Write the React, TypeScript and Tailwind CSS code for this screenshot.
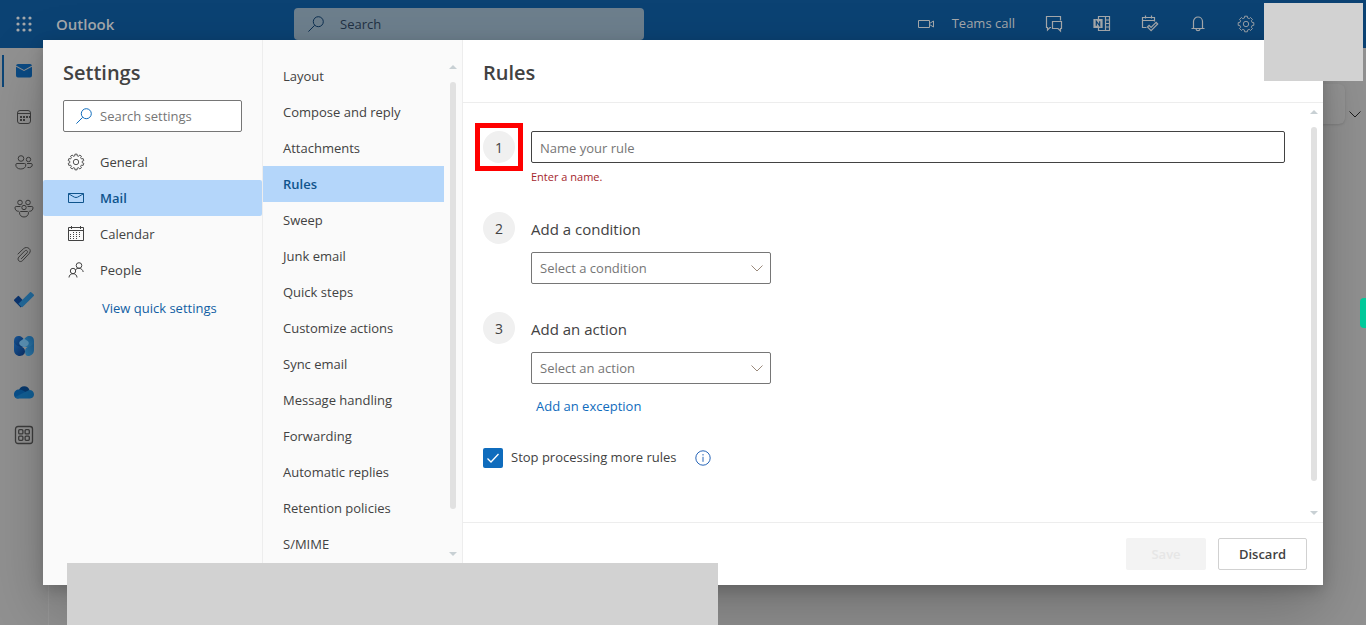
import type { ReactNode } from "react";

const categories = [
  { label: "General", icon: <GearIcon className="size-[18px]" teeth={10} /> },
  { label: "Mail", icon: <MailIcon />, active: true },
  { label: "Calendar", icon: <CalendarIcon /> },
  { label: "People", icon: <PeopleIcon /> },
];

const sections = [
  "Layout",
  "Compose and reply",
  "Attachments",
  "Rules",
  "Sweep",
  "Junk email",
  "Quick steps",
  "Customize actions",
  "Sync email",
  "Message handling",
  "Forwarding",
  "Automatic replies",
  "Retention policies",
  "S/MIME",
];

// closed gear outline, each tooth is a short outer edge between two valleys
function gearPath(teeth: number) {
  const step = (Math.PI * 2) / teeth;
  const points: string[] = [];
  for (let i = 0; i < teeth; i++) {
    const corners = [
      [-0.3, 7],
      [-0.22, 8.8],
      [0.22, 8.8],
      [0.3, 7],
    ];
    for (const [offset, r] of corners) {
      const a = (i + offset) * step;
      points.push(`${(Math.sin(a) * r).toFixed(2)} ${(-Math.cos(a) * r).toFixed(2)}`);
    }
  }
  return `M${points.join("L")}Z`;
}

function GearIcon({ className, teeth = 8 }: { className: string; teeth?: number }) {
  return (
    <svg viewBox="-10 -10 20 20" className={className} fill="none" stroke="currentColor" strokeWidth="1" strokeLinejoin="round">
      <path d={gearPath(teeth)} />
      <circle r="3" />
    </svg>
  );
}

function MailIcon() {
  return (
    <svg viewBox="0 0 18 18" className="size-[18px]" fill="none" stroke="currentColor">
      <path d="M1.5 4.5h15v9h-15zM1.5 4.800C5 6.500 7 8.500 9 8.500s4-2 7.500-3.700" />
    </svg>
  );
}

function CalendarIcon() {
  return (
    <svg viewBox="0 0 18 18" className="size-[18px]" fill="none" stroke="currentColor">
      <path d="M1.500 2.500h15v13h-15zM1.500 5.500h15M4.500 1v3M13.500 1v3" />
      <path d="M6 7.500h9M3 9.500h12M3 11.500h12M3 13.500h9" strokeDasharray="1 2" />
    </svg>
  );
}

function PeopleIcon() {
  return (
    <svg viewBox="0 0 18 18" className="size-[18px]" fill="none" stroke="currentColor">
      <circle cx="12" cy="4.500" r="2.800" />
      <circle cx="6" cy="10" r="2.700" />
      <path d="M8.500 9C9 7.800 10.300 7.300 12 7.300c2.200 0 4 1.800 4.200 3.700M2 16.500c0-2.200 1.800-3.800 4-3.800s4 1.600 4 3.800" />
    </svg>
  );
}

function SearchIcon({ className }: { className: string }) {
  return (
    <svg viewBox="0 0 16 16" className={className} fill="none" stroke="currentColor">
      <circle cx="10.300" cy="5.700" r="5" />
      <path d="M6.700 9.300L0.400 15.600" />
    </svg>
  );
}

function Chevron({ className }: { className: string }) {
  return (
    <svg viewBox="0 0 12 12" className={className} fill="none" stroke="currentColor">
      <path d="M0.500 3.500L6 9l5.500-5.500" />
    </svg>
  );
}

function RailButton({ label, children, active }: { label: string; children: ReactNode; active?: boolean }) {
  return (
    <button aria-label={label} className={`flex h-[46px] w-full items-center pl-0.5 ${active ? "text-[#0b4a83]" : "text-[#3c3c3c]"}`}>
      <span className={`mr-[10px] h-8 w-0.5 ${active ? "bg-[#0c4577]" : ""}`} />
      {children}
    </button>
  );
}

function Rail() {
  return (
    <nav aria-label="Apps" className="w-12 shrink-0">
      <RailButton label="Mail" active>
        <svg viewBox="0 0 20 20" className="size-5">
          <path d="M2 5.700L10 10l8-4.300V14.500a2 2 0 0 1-2 2H4a2 2 0 0 1-2-2z" fill="currentColor" />
          <path d="M2 4.600A2 2 0 0 1 4 3h12a2 2 0 0 1 2 1.600L10 8.900z" fill="currentColor" />
        </svg>
      </RailButton>
      <RailButton label="Calendar">
        <svg viewBox="0 0 20 20" className="size-5" fill="none" stroke="currentColor">
          <rect x="3.500" y="3.500" width="13" height="13" rx="2.500" />
          <path d="M3.500 6.500h13" />
          <path d="M9 10h7M6 13h6" strokeWidth="2" strokeDasharray="2 1" />
          <path d="M6 10h2" strokeWidth="2" />
        </svg>
      </RailButton>
      <RailButton label="People">
        <svg viewBox="0 0 20 20" className="size-5" fill="none" stroke="currentColor">
          <circle cx="7" cy="5.500" r="2.800" />
          <circle cx="14.500" cy="6.500" r="2.200" />
          <path d="M3 10.500h7.500c.8 0 1.300.5 1.300 1.300 0 2.500-1.800 4.200-5 4.200s-5-1.700-5-4.200c0-.8.400-1.300 1.200-1.300zM13 10.500h4c.8 0 1.300.5 1.300 1.200 0 2-1.500 3.300-4.800 2.800" />
        </svg>
      </RailButton>
      <RailButton label="Groups">
        <svg viewBox="0 0 20 20" className="size-5" fill="none" stroke="currentColor">
          <circle cx="6" cy="3.500" r="2.300" />
          <circle cx="14" cy="3.500" r="2.300" />
          <circle cx="10" cy="8.500" r="2.200" />
          <path d="M6.500 12.500h7c.7 0 1 .5 1 1.200 0 2.500-1.800 4.300-4.500 4.300s-4.500-1.800-4.500-4.300c0-.7.300-1.200 1-1.200zM6.500 7.500H2.200c-.8 0-1.200.5-1.200 1.200 0 2 1.300 3.800 3.800 3.600M13.500 7.500h4.300c.8 0 1.200.5 1.200 1.200 0 2-1.300 3.800-3.800 3.600" />
        </svg>
      </RailButton>
      <RailButton label="Files">
        <svg viewBox="0 0 20 20" className="size-5" fill="none" stroke="currentColor" strokeLinecap="round" strokeLinejoin="round">
          <path d="M4 9l5.500-5.300c3.500-3.200 9 .7 5.800 4.700l-6.800 7.300c-2.600 2.500-6-1-3.700-3.600l6-6.200c1.800-1.500 3.600.5 2.200 2l-5.600 5.800" />
        </svg>
      </RailButton>
      <RailButton label="To Do">
        <svg viewBox="0 0 20 20" className="size-5">
          <path d="M3.700 5.200L0.300 8.600a1 1 0 0 0 0 1.400l6.400 6.400 4.500-4.600-6.100-6.600a1 1 0 0 0-1.400 0z" fill="#0b3570" />
          <path d="M15.300 1.900L4.400 12.700l3 3.100a1 1 0 0 0 1.400 0L19.700 5a1 1 0 0 0 0-1.400l-1.900-1.900a1.700 1.700 0 0 0-2.500.2z" fill="#226a9c" />
        </svg>
      </RailButton>
      <RailButton label="Viva Engage">
        <svg viewBox="0 0 20 20" className="mb-0.5 size-5">
          <defs>
            <linearGradient id="engage-left" x1="0" y1="0" x2="1" y2="1">
              <stop offset="0" stopColor="#185a9c" />
              <stop offset="1" stopColor="#0a2d63" />
            </linearGradient>
            <linearGradient id="engage-right" x1="1" y1="0" x2="0" y2="1">
              <stop offset="0" stopColor="#1b5f94" />
              <stop offset="1" stopColor="#2f7aa8" />
            </linearGradient>
          </defs>
          <path d="M0 4.500C0 2 2 0 4.500 0S10 2 10 5v6H4.500C2 11 0 9 0 6.500z" fill="url(#engage-left)" />
          <path d="M20 4.500C20 2 18 0 15.500 0S10 2 10 5v6h5.500C18 11 20 9 20 6.500z" fill="url(#engage-right)" />
          <path d="M0 6c1 2.500 3 4 6 4.500 3 .6 5 2 5 4.800 0 2.700-2.200 4.700-5 4.700-3.500 0-6-2.500-6-6z" fill="url(#engage-left)" />
          <path d="M20 6c-1 2.500-2.500 4-5 4.500-2.800.6-4 2.500-4 5 0 2.500 1 4.500 3 4.500 3.500 0 6-2.500 6-6z" fill="url(#engage-right)" />
          <path d="M10 2.500l4 2.800c1.700 2 .8 4.700-4 5.900-4.800-1.200-5.700-3.900-4-5.900z" fill="#5b93b6" />
        </svg>
      </RailButton>
      <RailButton label="OneDrive">
        <svg viewBox="0 0 20 20" className="size-5">
          <path d="M5 7a5.500 5.500 0 0 1 10.500 0l-4 4z" fill="#07386c" />
          <path d="M5 6.500c2-.2 3.500.6 5 1.500l6 4-12 3.500C1 15.500 0 13.500 0 11.500c0-3 2.200-5 5-5z" fill="#08508c" />
          <path d="M15.500 7c2.700 0 4.500 2 4.500 4.300s-1.500 4.200-4 4.200H4.500C3 15.500 2 15 1.200 14L11 9z" fill="#125f95" />
        </svg>
      </RailButton>
      <RailButton label="More apps">
        <svg viewBox="0 0 20 20" className="mb-2 size-5" fill="none" stroke="currentColor" strokeWidth="1.300">
          <rect x="1.500" y="1.500" width="17" height="17" rx="2.500" />
          <rect x="4.700" y="4.700" width="4.200" height="4.200" rx="1" />
          <rect x="11.100" y="4.700" width="4.200" height="4.200" rx="1" />
          <rect x="4.700" y="11.100" width="4.200" height="4.200" rx="1" />
          <rect x="11.100" y="11.100" width="4.200" height="4.200" rx="1" />
        </svg>
      </RailButton>
    </nav>
  );
}

function Header() {
  return (
    <header className="flex h-12 shrink-0 items-center bg-[#0b4273] text-[#a5a8ab]">
      <button aria-label="App launcher" className="flex w-12 justify-center">
        <svg viewBox="0 0 16 16" className="size-4" fill="currentColor">
          {[2, 8, 14].map((y) => [2, 8, 14].map((x) => <circle key={`${x}-${y}`} cx={x} cy={y} r="1.600" />))}
        </svg>
      </button>
      <span className="w-[246px] pl-2 text-[15px] font-semibold">Outlook</span>
      <label className="flex h-8 w-[350px] items-center gap-4 rounded bg-[#6d7f8d] pl-3.5 text-[#0c2f50]">
        <SearchIcon className="size-4" />
        <input type="search" placeholder="Search" aria-label="Search" className="min-w-0 flex-1 pt-0.5 text-[13px] outline-none placeholder:text-[#1f3144]" />
      </label>
      <div className="ml-auto mr-[111px] flex items-center">
        <button className="flex items-center gap-[17px] text-[13px]">
          <svg viewBox="0 0 18 18" className="size-[18px]" fill="none" stroke="currentColor">
            <path d="M1.500 5.500h11v7h-11zM12.500 8.500l4-2.500v6l-4-2.500" />
          </svg>
          Teams call
        </button>
        <div className="ml-[30px] flex gap-[30px]">
          <button aria-label="Chat">
            <svg viewBox="0 0 18 18" className="size-[18px]" fill="none" stroke="currentColor" strokeWidth="1.200">
              <path d="M6 12.500H5l-2.500 2.500v-2.500h-1v-11h14v4" />
              <path d="M7.500 6.500h9v7h-1V16L13 13.500H7.500z" />
            </svg>
          </button>
          <button aria-label="OneNote feed">
            <svg viewBox="0 0 18 18" className="size-[18px]" fill="none" stroke="currentColor" strokeWidth="1.200">
              <path d="M5.500 4.500v-3h11v14h-11v-3M12.500 1.500v14M12.500 5h4M12.500 8.500h4M12.500 12h4" />
              <path d="M1 4.500h8v8H1z" fill="currentColor" />
              <path d="M3.300 10.800V6.200l3.400 4.600V6.200" stroke="#0b4273" />
            </svg>
          </button>
          <button aria-label="My Day">
            <svg viewBox="0 0 18 18" className="size-[18px]" fill="none" stroke="currentColor" strokeWidth="1.200">
              <path d="M5.500 12.500h-4v-10h12v4M1.500 5.500h12M4.500 0.500v3M10.500 0.500v3" />
              <path d="M6.500 12l1.600-1.600 2 2 5-5 1.600 1.600-6.600 6.700z" />
            </svg>
          </button>
          <button aria-label="Notifications">
            <svg viewBox="0 0 18 18" className="size-[18px]" fill="none" stroke="currentColor" strokeWidth="1.200">
              <path d="M4.500 13.500V6.500a4.500 4.500 0 0 1 9 0v7M2.500 13.500h13M7 14c.3 2.200 3.700 2.200 4 0" />
            </svg>
          </button>
          <button aria-label="Settings">
            <GearIcon className="size-[18px]" />
          </button>
        </div>
      </div>
    </header>
  );
}

function Scrollbar({ className, thumb }: { className: string; thumb: string }) {
  return (
    <div aria-hidden="true" className={`flex w-[18px] shrink-0 flex-col items-center ${className}`}>
      <span className="border-x-4 border-b-4 border-x-transparent border-b-[#c8d0d4]" />
      <span className={`mt-[13px] w-1.5 rounded-full bg-[#e1e1e1] ${thumb}`} />
      <span className="mt-auto border-x-4 border-t-4 border-x-transparent border-t-[#c8d0d4]" />
    </div>
  );
}

function Step({ n, title, children }: { n: number; title: string; children: ReactNode }) {
  return (
    <section className="flex gap-4">
      <StepNumber n={n} />
      <div>
        <h3 className="flex h-[34px] items-center text-[15px]">{title}</h3>
        <div className="mt-1.5">{children}</div>
      </div>
    </section>
  );
}

function StepNumber({ n }: { n: number }) {
  return <span className="flex size-8 shrink-0 items-center justify-center rounded-full bg-[#f0f0f0] pt-0.5 text-sm">{n}</span>;
}

function Picker({ label }: { label: string }) {
  return (
    <div className="relative w-60">
      <select aria-label={label} className="h-8 w-full appearance-none rounded-xs border border-[#767676] bg-white pt-0.5 pl-2 text-[13px] text-[#767676]">
        <option>{label}</option>
      </select>
      <Chevron className="pointer-events-none absolute right-2 top-2.5 size-3 text-[#9a897b]" />
    </div>
  );
}

function Categories() {
  return (
    <div className="w-[220px] shrink-0 border-r border-[#ededed]">
      <h1 className="h-[46px] px-5 pt-[19px] text-xl leading-7 font-semibold">Settings</h1>
      <label className="mx-5 mt-3.5 flex h-8 items-center gap-2 rounded-xs border border-[#767676] bg-white pl-3">
        <SearchIcon className="size-4 shrink-0 text-[#0f6cbd]" />
        <input type="search" placeholder="Search settings" aria-label="Search settings" className="min-w-0 flex-1 pt-0.5 text-[13px] outline-none placeholder:text-[#767676]" />
      </label>
      <ul className="mt-3">
        {categories.map((c) => (
          <li key={c.label}>
            <button
              className={`flex h-9 w-full items-center gap-[15px] rounded-xs pl-6 text-[13px] ${c.active ? "bg-[#b4d6fa] font-semibold text-[#0f548c]" : ""}`}
            >
              {c.icon}
              <span className="pt-0.5">{c.label}</span>
            </button>
          </li>
        ))}
      </ul>
      <a href="#quick" className="mt-[11px] ml-[59px] inline-block text-[13px] text-[#115ea3]">
        View quick settings
      </a>
    </div>
  );
}

function Sections() {
  return (
    <div className="flex w-[200px] shrink-0 border-r border-[#ededed]">
      <ul className="w-[181px] pt-[18px]">
        {sections.map((s) => (
          <li key={s}>
            <button
              className={`h-9 w-full pt-0.5 pl-5 text-left text-[13px] ${s === "Rules" ? "bg-[#b4d6fa] font-semibold text-[#0f548c]" : ""}`}
            >
              {s}
            </button>
          </li>
        ))}
      </ul>
      <Scrollbar className="pt-[25px] pb-[29px]" thumb="h-[427px]" />
    </div>
  );
}

function RulesPanel() {
  return (
    <div className="flex min-w-0 flex-1 flex-col bg-white">
      <h2 className="h-[63px] border-b border-[#ededed] px-5 pt-[19px] text-xl leading-7 font-semibold">Rules</h2>
      <div className="flex min-h-0 flex-1">
        <form className="min-w-0 flex-1 pt-5 pr-5 pl-3">
          <div className="flex gap-2">
            <div className="size-12 shrink-0 border-[5px] border-[#ff0000] p-[3px]">
              <StepNumber n={1} />
            </div>
            <div className="flex-1 pt-2">
              <input
                type="text"
                aria-label="Rule name"
                placeholder="Name your rule"
                className="h-8 w-full rounded-xs border border-[#424242] px-2 pt-0.5 text-[13px] outline-none placeholder:text-[#767676]"
              />
              <p className="mt-1.5 text-[11px] leading-4 text-[#a4262c]">Enter a name.</p>
            </div>
          </div>
          <div className="mt-[27px] flex flex-col gap-7 pl-2">
            <Step n={2} title="Add a condition">
              <Picker label="Select a condition" />
            </Step>
            <Step n={3} title="Add an action">
              <Picker label="Select an action" />
              <button type="button" className="mt-3 ml-[5px] block text-[13px] leading-5 text-[#0f6cbd]">
                Add an exception
              </button>
            </Step>
          </div>
          <div className="mt-8 flex items-center pl-2">
            <label className="flex items-center gap-2 text-[13px]">
              <span className="relative size-5">
                <input type="checkbox" defaultChecked className="block size-5 appearance-none rounded-xs bg-[#0f6cbd]" />
                <svg viewBox="0 0 20 20" className="pointer-events-none absolute inset-0 size-5" fill="none" stroke="white" strokeWidth="1.300">
                  <path d="M4.500 10.500l3.500 3.500 7.500-8" />
                </svg>
              </span>
              <span>Stop processing more rules</span>
            </label>
            <button type="button" aria-label="More information" className="ml-[18px] text-[#2866b8]">
              <svg viewBox="0 0 16 16" className="size-4" fill="none" stroke="currentColor">
                <circle cx="8" cy="8" r="7.200" />
                <path d="M8 6.800v5M8 4v1.500" />
              </svg>
            </button>
          </div>
        </form>
        <Scrollbar className="pt-[7px] pb-[7px]" thumb="h-[354px]" />
      </div>
      <footer className="flex h-[63px] items-center justify-end gap-3 border-t border-[#ededed] px-4 text-[13px] font-semibold">
        <button disabled className="h-8 w-20 rounded-xs bg-[#f3f3f3] pt-0.5 text-[#e6e6e6]">
          Save
        </button>
        <button className="h-8 w-[89px] rounded-xs border border-[#d1d1d1] pt-0.5">Discard</button>
      </footer>
    </div>
  );
}

export default function App() {
  return (
    <div className="relative flex h-screen flex-col overflow-hidden bg-[#919191] font-['Open_Sans','Noto_Sans',sans-serif] text-[#424242]">
      <Header />
      <div className="flex min-h-0 flex-1">
        <Rail />
        <main className="flex-1 border-l border-[#989898]">
          <div className="flex items-end justify-end gap-1 pt-9 pr-[5px]">
            <div className="h-10 w-40 rounded-md bg-[#949494] shadow-sm" />
            <button aria-label="Ribbon options" className="pb-1 text-[#1c1c1c]">
              <Chevron className="size-3" />
            </button>
          </div>
        </main>
      </div>

      <div className="absolute inset-0 flex justify-center py-10">
        <div role="dialog" aria-label="Settings" className="flex w-full max-w-[1280px] bg-[#fafafa] shadow-[0_26px_58px_rgba(0,0,0,0.22),0_5px_14px_rgba(0,0,0,0.18)]">
          <Categories />
          <Sections />
          <RulesPanel />
        </div>
      </div>

      <div className="absolute top-[3px] right-[3px] h-[78px] w-[99px] bg-[#d2d2d2]" />
      <div className="absolute bottom-0 left-[67px] h-[62px] w-[651px] bg-[#d2d2d2]" />
      <div className="absolute top-[298px] right-0 h-[30px] w-1.5 rounded-l bg-[#00c99a]" />
    </div>
  );
}
